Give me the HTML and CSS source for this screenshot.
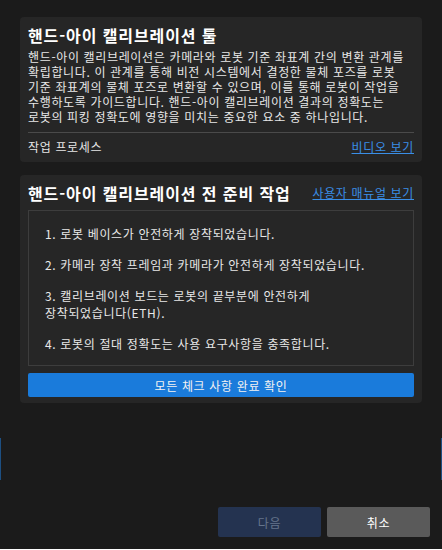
FILE: index.html
```html
<!DOCTYPE html>
<html lang="ko">
<head>
    <meta charset="UTF-8">
    <meta name="viewport" content="width=device-width, initial-scale=1.0">
    <title>핸드-아이 캘리브레이션</title>
    <link rel="stylesheet" href="styles.css">
</head>
<body>
    <div class="dialog">
        <div class="content">
            <section class="card intro">
                <h1 class="card-title">핸드-아이 캘리브레이션 툴</h1>
                <p class="intro-text">핸드-아이 캘리브레이션은 카메라와 로봇 기준 좌표계 간의 변환 관계를 확립합니다. 이 관계를 통해 비전 시스템에서 결정한 물체 포즈를 로봇 기준 좌표계의 물체 포즈로 변환할 수 있으며, 이를 통해 로봇이 작업을 수행하도록 가이드합니다. 핸드-아이 캘리브레이션 결과의 정확도는 로봇의 피킹 정확도에 영향을 미치는 중요한 요소 중 하나입니다.</p>
                <div class="intro-footer">
                    <span>작업 프로세스</span>
                    <a href="#" class="link">비디오 보기</a>
                </div>
            </section>

            <section class="card prep">
                <div class="prep-header">
                    <h2 class="card-title">핸드-아이 캘리브레이션 전 준비 작업</h2>
                    <a href="#" class="link">사용자 매뉴얼 보기</a>
                </div>
                <div class="checklist">
                    <p>1. 로봇 베이스가 안전하게 장착되었습니다.</p>
                    <p>2. 카메라 장착 프레임과 카메라가 안전하게 장착되었습니다.</p>
                    <p>3. 캘리브레이션 보드는 로봇의 끝부분에 안전하게<br>장착되었습니다(ETH).</p>
                    <p>4. 로봇의 절대 정확도는 사용 요구사항을 충족합니다.</p>
                </div>
                <button class="confirm-btn">모든 체크 사항 완료 확인</button>
            </section>
        </div>

        <div class="actions">
            <button class="btn btn-next" disabled>다음</button>
            <button class="btn btn-cancel">취소</button>
        </div>

        <span class="edge edge-left"></span>
        <span class="edge edge-right"></span>
    </div>
</body>
</html>
```

FILE: styles.css
```css
html {
    background: #fff;
}

body {
    margin: 0;
    font-family: "Noto Sans CJK KR", "Noto Sans", sans-serif;
    font-size: 12px;
    letter-spacing: 0.65px;
    word-break: keep-all;
    color: #e6e6e6;
}

.dialog {
    position: relative;
    height: 549px;
    box-sizing: border-box;
    background: #1b1b1b;
    display: flex;
    flex-direction: column;
    padding: 17px 0 12px;
}

.content {
    padding: 0 20px;
    display: flex;
    flex-direction: column;
    gap: 13px;
}

.card {
    background: #262626;
    border-radius: 4px;
    padding: 8px 8px 6px;
}

.card-title {
    margin: 0;
    font-size: 16px;
    font-weight: 700;
    letter-spacing: 0.9px;
    line-height: 20px;
    color: #fff;
}

.intro-text {
    margin: 4px 0 0;
    line-height: 15px;
    color: #e8e8e8;
}

.intro-footer {
    margin-top: 8px;
    border-top: 1px solid #4a4a4a;
    padding-top: 4px;
    display: flex;
    justify-content: space-between;
    align-items: center;
    line-height: 20px;
}

.intro {
    padding-bottom: 5px;
}

.link {
    color: #3a8ee6;
    text-decoration: underline;
    font-size: 12px;
    line-height: 20px;
}

.prep-header {
    display: flex;
    justify-content: space-between;
    align-items: center;
}

.checklist {
    margin-top: 7px;
    border: 1px solid #3d3d3d;
    padding: 14px 16px 13px;
    display: flex;
    flex-direction: column;
    gap: 14px;
}

.checklist p {
    margin: 0;
    line-height: 17px;
    color: #e8e8e8;
}

.confirm-btn {
    margin-top: 7px;
    width: 100%;
    height: 24px;
    border: none;
    border-radius: 2px;
    background: #1a7bdb;
    color: #f2f2f2;
    font-family: inherit;
    font-size: 12px;
    letter-spacing: inherit;
    cursor: pointer;
}

.actions {
    margin-top: auto;
    padding: 0 12px;
    display: flex;
    justify-content: flex-end;
    gap: 6px;
}

.btn {
    width: 103px;
    height: 30px;
    border: none;
    border-radius: 2px;
    font-family: inherit;
    font-size: 12px;
    letter-spacing: inherit;
}

.btn-next {
    background: #243350;
    color: #66758c;
}

.btn-cancel {
    background: #5a5a5a;
    color: #fff;
    cursor: pointer;
}

.edge {
    position: absolute;
    top: 438px;
    width: 1px;
    height: 42px;
    background: #1d4f82;
}

.edge-left {
    left: 0;
}

.edge-right {
    right: 0;
}
```
